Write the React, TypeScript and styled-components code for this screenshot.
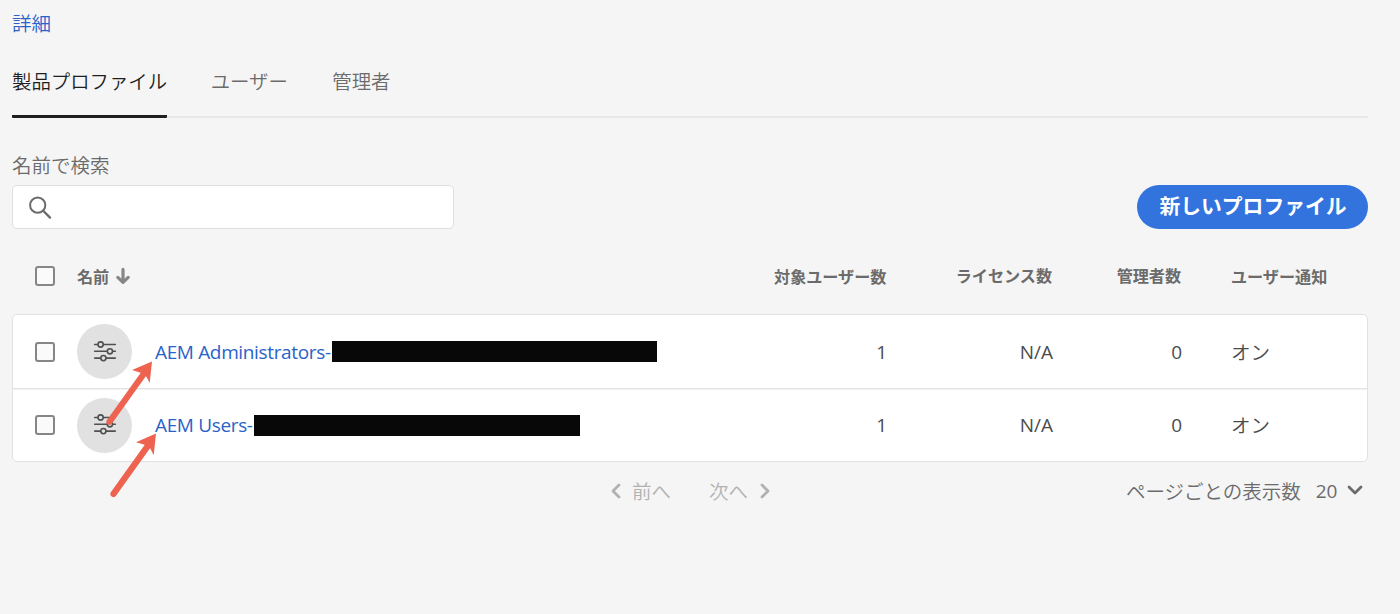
import React from "react";
import styled, { createGlobalStyle } from "styled-components";

const GlobalStyle = createGlobalStyle`
  * { box-sizing: border-box; }
  body {
    margin: 0;
    background: #f5f5f5;
    color: #4b4b4b;
    font-family: "Open Sans", "Noto Sans CJK JP", sans-serif;
    font-size: 19.5px;
    font-weight: 350;
    line-height: 28px;
  }
`;

const Page = styled.main`
  position: relative;
  height: 614px;
  padding: 9px 32px 0 12px;
  overflow: hidden;
  display: flex;
  flex-direction: column;
`;

const JpText = styled.span<{ $weight?: number }>`
  font-family: "Noto Sans CJK JP", sans-serif;
  font-weight: ${(p) => p.$weight ?? 350};
  white-space: nowrap;
`;

const DetailLink = styled.a`
  font-family: "Noto Sans CJK JP", sans-serif;
  color: #2a62c9;
  height: 28px;
`;

const Tabs = styled.nav`
  display: flex;
  gap: 43.5px;
  height: 81px;
  padding-top: 30px;
  border-bottom: 2px solid #e8e8e8;
`;

const Tab = styled.a<{ $active?: boolean }>`
  font-family: "Noto Sans CJK JP", sans-serif;
  height: 51px;
  font-size: 19.4px;
  color: ${(p) => (p.$active ? "#1f1f1f" : "#6b6b6b")};
  border-bottom: 3px solid ${(p) => (p.$active ? "#1f1f1f" : "transparent")};
  border-radius: 1px;
  & + & + & {
    margin-left: 1px;
  }
`;

const Toolbar = styled.section`
  display: flex;
  justify-content: space-between;
  align-items: flex-end;
  height: 111px;
`;

const SearchField = styled.label`
  display: flex;
  flex-direction: column;
  gap: 6px;
  color: #6b6b6b;
`;

const SearchBox = styled.div`
  display: flex;
  align-items: center;
  width: 442px;
  height: 44px;
  padding: 2px 0 0 16px;
  background: #fff;
  border: 1px solid #dfdfdf;
  border-radius: 5px;
`;

const PrimaryButton = styled.button`
  width: 231px;
  height: 44px;
  padding: 0 0 4px 1px;
  border: 0;
  border-radius: 22px;
  background: #3273de;
  color: #fff;
  font-family: "Noto Sans CJK JP", sans-serif;
  font-size: 20.8px;
  font-weight: 700;
  white-space: nowrap;
`;

const Line = styled.div`
  display: grid;
  grid-template-columns: 42px 77px 1fr 166px 129px 49px 136px;
  align-items: center;
  padding-left: 22px;
`;

const HeadLine = styled(Line)`
  height: 85px;
  padding: 8px 1px 0 23px;
  font-size: 16.1px;
  line-height: 26px;
  color: #6b6b6b;
`;

const HeadName = styled.div`
  display: flex;
  align-items: center;
  gap: 6px;
`;

const Spread = styled.div`
  grid-column: 2 / 4;
  display: flex;
  justify-content: space-between;
  padding-right: 0.6px;
`;

const Table = styled.section`
  height: 148px;
  background: #fff;
  border: 1px solid #e1e1e1;
  border-radius: 5px;
`;

const Row = styled(Line)`
  height: 73px;
  & + & {
    border-top: 1px solid #e4e4e4;
    box-shadow: inset 0 1px #f1f1f1;
  }
`;

const Checkbox = styled.span`
  width: 20px;
  height: 20px;
  border: 2px solid #868686;
  border-radius: 3px;
  background: #fafafa;
`;

const Avatar = styled.span`
  display: flex;
  align-items: center;
  justify-content: center;
  width: 55px;
  height: 55px;
  border-radius: 50%;
  background: #e1e1e1;
`;

const NameCell = styled.div`
  display: flex;
  align-items: center;
  justify-content: space-between;
`;

const ProfileName = styled.a`
  display: flex;
  align-items: center;
  color: #2a62c9;
`;

const NameText = styled.span<{ $width: number }>`
  width: ${(p) => p.$width}px;
  padding-left: 1px;
  white-space: nowrap;
  font-size: 19px;
  font-weight: 400;
  letter-spacing: -0.35px;
`;

const Redaction = styled.span<{ $width: number }>`
  width: ${(p) => p.$width}px;
  height: 21px;
  background: #080808;
`;

const Num = styled.span`
  text-align: right;
  font-size: 19px;
  font-weight: 400;
`;

const HeadCell = styled.span`
  text-align: right;
  padding-right: 1px;
`;

const Footer = styled.footer`
  display: grid;
  grid-template-columns: 598px 1fr auto;
  align-items: center;
  height: 57px;
  color: #6b6b6b;
`;

const Pager = styled.div`
  grid-column: 2;
  display: flex;
  gap: 38px;
  color: #b1b1b1;
`;

const PagerLink = styled.a`
  display: flex;
  align-items: center;
  gap: 8px;
  & + & {
    gap: 11px;
  }
`;

const PageSize = styled.div`
  display: flex;
  align-items: center;
  padding-right: 5px;
`;

const SizeValue = styled.span`
  margin: 0 10px 0 15px;
  font-size: 19px;
  font-weight: 400;
  letter-spacing: -0.3px;
`;

const Annotations = styled.svg`
  position: absolute;
  left: 0;
  top: 0;
  pointer-events: none;
`;

const SearchIcon = () => (
  <svg width="24" height="24" viewBox="0 0 24 24" fill="none" stroke="#6b6b6b" strokeWidth="2">
    <circle cx="8.7" cy="9.2" r="7.6" />
    <path d="M14.2 14.7 21 21.6" strokeLinecap="round" strokeWidth="2.3" />
  </svg>
);

const SortIcon = () => (
  <svg width="16" height="18" viewBox="0 0 16 18" fill="none" stroke="#868686" strokeWidth="3.2" strokeLinecap="round" strokeLinejoin="round">
    <path d="M8 2.4V14.8M2.8 10.4 8 15.4 13.2 10.4" />
  </svg>
);

const SlidersIcon = () => (
  <svg width="24" height="24" viewBox="0 0 24 24" fill="#e1e1e1" stroke="#505050" strokeWidth="1.6" strokeLinecap="round">
    <path d="M1.7 4.5H22.3M1.7 11.3H22.3M1.7 18.1H22.3" />
    <circle cx="7.6" cy="4.5" r="2.6" />
    <circle cx="16.9" cy="11.3" r="2.6" />
    <circle cx="10.4" cy="18.1" r="2.6" />
  </svg>
);

const Chevron = ({ d, w, h, color }: { d: string; w: number; h: number; color: string }) => (
  <svg width={w} height={h} viewBox={`0 0 ${w} ${h}`} fill="none" stroke={color} strokeWidth="2.8" strokeLinecap="round" strokeLinejoin="round">
    <path d={d} />
  </svg>
);

const Arrow = ({ x, y }: { x: number; y: number }) => (
  <g transform={`translate(${x} ${y})`} fill="#ed6350">
    <path d="M-42.5 60.3-8 12" stroke="#ed6350" strokeWidth="6.2" strokeLinecap="round" />
    <path d="M0 0-20 8.6-11.4 11.2-5.6 15.2-2.3 21.6Z" />
  </g>
);

const profiles = [
  { name: "AEM Administrators-", nameWidth: 178, hidden: 325 },
  { name: "AEM Users-", nameWidth: 100, hidden: 326 },
];

export default function App() {
  return (
    <>
      <GlobalStyle />
      <Page>
        <DetailLink>詳細</DetailLink>
        <Tabs>
          <Tab $active>製品プロファイル</Tab>
          <Tab>ユーザー</Tab>
          <Tab>管理者</Tab>
        </Tabs>
        <Toolbar>
          <SearchField>
            <JpText>名前で検索</JpText>
            <SearchBox>
              <SearchIcon />
            </SearchBox>
          </SearchField>
          <PrimaryButton>新しいプロファイル</PrimaryButton>
        </Toolbar>
        <HeadLine>
          <Checkbox />
          <Spread>
            <HeadName>
              <JpText $weight={700}>名前</JpText>
              <SortIcon />
            </HeadName>
            <JpText $weight={700}>対象ユーザー数</JpText>
          </Spread>
          <HeadCell>
            <JpText $weight={700}>ライセンス数</JpText>
          </HeadCell>
          <HeadCell>
            <JpText $weight={700}>管理者数</JpText>
          </HeadCell>
          <span />
          <JpText $weight={700}>ユーザー通知</JpText>
        </HeadLine>
        <Table>
          {profiles.map((p) => (
            <Row key={p.name}>
              <Checkbox />
              <Avatar>
                <SlidersIcon />
              </Avatar>
              <NameCell>
                <ProfileName>
                  <NameText $width={p.nameWidth}>{p.name}</NameText>
                  <Redaction $width={p.hidden} />
                </ProfileName>
                <Num>1</Num>
              </NameCell>
              <Num>N/A</Num>
              <Num>0</Num>
              <span />
              <JpText>オン</JpText>
            </Row>
          ))}
        </Table>
        <Footer>
          <Pager>
            <PagerLink>
              <Chevron d="M9 2 3 8 9 14" w={14} h={16} color="#b1b1b1" />
              <JpText>前へ</JpText>
            </PagerLink>
            <PagerLink>
              <JpText>次へ</JpText>
              <Chevron d="M3 2 9 8 3 14" w={14} h={16} color="#b1b1b1" />
            </PagerLink>
          </Pager>
          <PageSize>
            <JpText>ページごとの表示数</JpText>
            <SizeValue>20</SizeValue>
            <Chevron d="M2 2 8 8 14 2" w={16} h={12} color="#6b6b6b" />
          </PageSize>
        </Footer>
        <Annotations width="200" height="510" viewBox="0 0 200 510">
          <Arrow x={152} y={361.5} />
          <Arrow x={156} y={433.6} />
        </Annotations>
      </Page>
    </>
  );
}
